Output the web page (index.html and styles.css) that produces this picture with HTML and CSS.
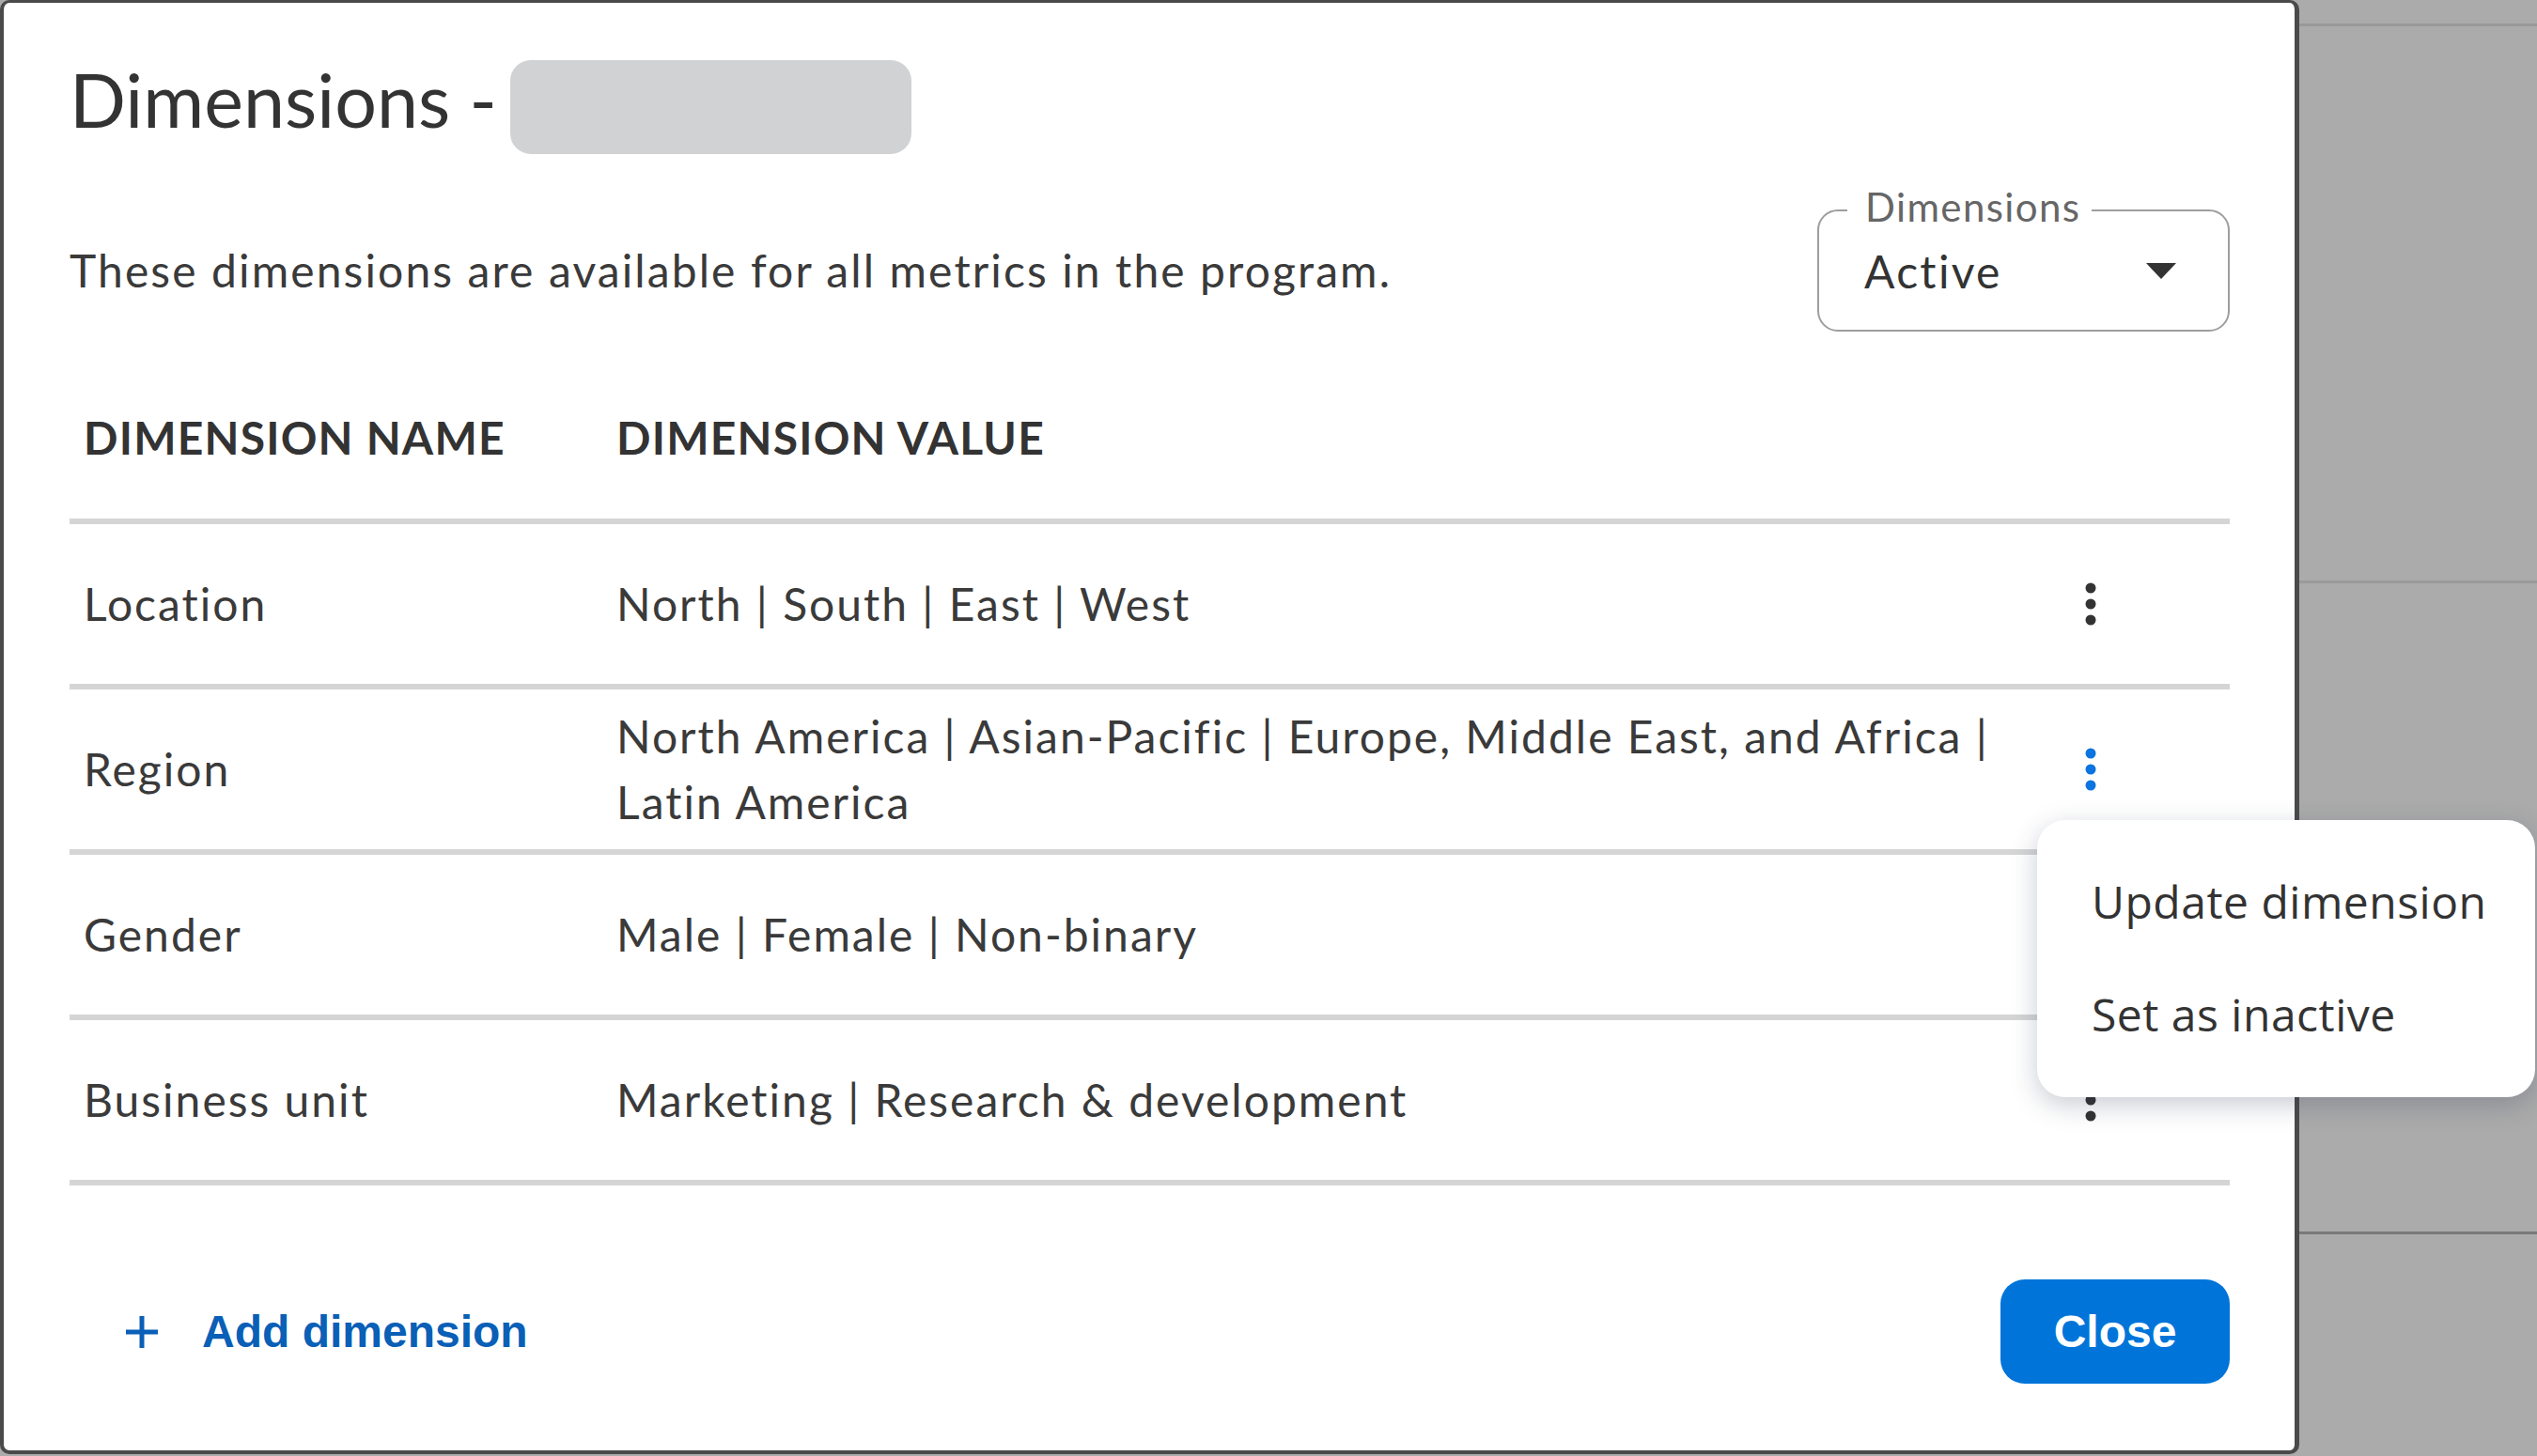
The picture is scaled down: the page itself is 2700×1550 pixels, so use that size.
FILE: index.html
```html
<!DOCTYPE html>
<html lang="en">
<head>
<meta charset="utf-8">
<title>Dimensions</title>
<link rel="stylesheet" href="styles.css">
</head>
<body>
<div class="modal">
  <div class="title-row">
    <h1 class="title">Dimensions -</h1>
    <div class="pill"></div>
  </div>
  <div class="desc-row">
    <p class="desc">These dimensions are available for all metrics in the program.</p>
    <div class="select">
      <span class="select-label">Dimensions</span>
      <span class="select-value">Active</span>
      <span class="caret"></span>
    </div>
  </div>
  <div class="table">
    <div class="row head">
      <div class="cell">DIMENSION NAME</div>
      <div class="cell">DIMENSION VALUE</div>
      <div class="cell"></div>
    </div>
    <div class="row">
      <div class="cell">Location</div>
      <div class="cell">North | South | East | West</div>
      <div class="cell kebab"><svg width="12" height="46" viewBox="0 0 12 46"><circle cx="6" cy="6" r="5.5"/><circle cx="6" cy="23" r="5.5"/><circle cx="6" cy="40" r="5.5"/></svg></div>
    </div>
    <div class="row">
      <div class="cell">Region</div>
      <div class="cell">North America | Asian-Pacific | Europe, Middle East, and Africa |<br>Latin America</div>
      <div class="cell kebab active"><svg width="12" height="46" viewBox="0 0 12 46"><circle cx="6" cy="6" r="5.5"/><circle cx="6" cy="23" r="5.5"/><circle cx="6" cy="40" r="5.5"/></svg></div>
    </div>
    <div class="row">
      <div class="cell">Gender</div>
      <div class="cell">Male | Female | Non-binary</div>
      <div class="cell kebab"><svg width="12" height="46" viewBox="0 0 12 46"><circle cx="6" cy="6" r="5.5"/><circle cx="6" cy="23" r="5.5"/><circle cx="6" cy="40" r="5.5"/></svg></div>
    </div>
    <div class="row">
      <div class="cell">Business unit</div>
      <div class="cell">Marketing | Research &amp; development</div>
      <div class="cell kebab"><svg width="12" height="46" viewBox="0 0 12 46"><circle cx="6" cy="6" r="5.5"/><circle cx="6" cy="23" r="5.5"/><circle cx="6" cy="40" r="5.5"/></svg></div>
    </div>
  </div>
  <div class="footer">
    <button class="add">
      <svg class="plus" width="34" height="36" viewBox="0 0 34 36"><path d="M17 1V35M0 18H34" stroke="currentColor" stroke-width="5"/></svg>
      <span>Add dimension</span>
    </button>
    <button class="close">Close</button>
  </div>
</div>
<div class="backdrop">
  <div class="band b1"></div>
  <div class="band b2"></div>
  <div class="band b3"></div>
</div>
<div class="menu">
  <div class="menu-item">Update dimension</div>
  <div class="menu-item">Set as inactive</div>
</div>
</body>
</html>
```
FILE: styles.css
```css
html, body {
  margin: 0;
  padding: 0;
}
body {
  width: 2700px;
  height: 1550px;
  background: #ababab;
  display: flex;
  align-items: flex-start;
  overflow: hidden;
  font-family: Lato, "Open Sans", sans-serif;
  color: #3a3a3a;
}
.modal {
  box-sizing: border-box;
  width: 2447px;
  height: 1548px;
  flex: none;
  background: #fff;
  border: 4px solid #4a4a4a;
  border-top-width: 3px;
  border-right-width: 5px;
  border-radius: 10px;
  padding: 61px 69px 0 70px;
}
.title-row {
  display: flex;
  align-items: flex-start;
  gap: 14px;
}
.title {
  margin: 0;
  font-size: 79px;
  line-height: 84px;
  font-weight: 400;
  color: #333;
}
.pill {
  width: 427px;
  height: 100px;
  border-radius: 22px;
  background: #d1d2d4;
}
.desc-row {
  display: flex;
  justify-content: space-between;
  align-items: flex-start;
  margin-top: 59px;
}
.desc {
  margin: 0;
  font-size: 48px;
  line-height: 130px;
  letter-spacing: 2.1px;
}
.select {
  position: relative;
  box-sizing: border-box;
  width: 439px;
  height: 130px;
  border: 2px solid #9e9e9e;
  border-radius: 22px;
  display: flex;
  align-items: center;
  justify-content: space-between;
  padding: 0 55px 0 48px;
}
.select-label {
  position: absolute;
  left: 30px;
  top: -26px;
  padding: 0 12px 0 19px;
  background: #fff;
  font-size: 42px;
  line-height: 42px;
  letter-spacing: 1.4px;
  color: #666;
}
.select-value {
  font-size: 48px;
  letter-spacing: 2.3px;
  color: #333;
}
.caret {
  width: 0;
  height: 0;
  border-left: 16px solid transparent;
  border-right: 16px solid transparent;
  border-top: 17px solid #333;
}
.table {
  display: flex;
  flex-direction: column;
}
.row {
  display: grid;
  grid-template-columns: 584px 1fr 150px;
  padding-right: 73px;
  height: 170px;
  align-items: center;
  border-bottom: 6px solid #d5d5d5;
  font-size: 48px;
  line-height: 70px;
  letter-spacing: 2px;
}
.row .cell:first-child {
  padding-left: 15px;
}
.row .cell:nth-child(2) {
  margin-left: -2px;
}
.row.head {
  height: 199px;
  align-items: start;
  font-weight: 700;
  line-height: 58px;
  letter-spacing: 1.2px;
  color: #333;
}
.row.head .cell {
  padding-top: 84px;
}
.kebab {
  display: flex;
  justify-content: center;
  fill: #333;
}
.kebab.active {
  fill: #0b74de;
}
.kebab svg {
  display: block;
}
.footer {
  display: flex;
  justify-content: space-between;
  align-items: center;
  margin-top: 100px;
  height: 111px;
}
button {
  font: inherit;
  border: none;
  background: none;
  padding: 0;
  cursor: pointer;
}
.add {
  display: flex;
  align-items: center;
  gap: 47px;
  margin-left: 60px;
  color: #0a5fb6;
  font-family: "Liberation Sans", Arial, sans-serif;
  font-weight: 700;
  font-size: 48px;
}
.plus {
  display: block;
}
.close {
  width: 244px;
  height: 111px;
  border-radius: 26px;
  background: #0074d9;
  color: #fff;
  font-family: "Liberation Sans", Arial, sans-serif;
  font-weight: 700;
  font-size: 48px;
}
.backdrop {
  flex: 1;
  display: flex;
  flex-direction: column;
}
.band {
  flex: none;
}
.b1 {
  height: 25px;
  border-bottom: 3px solid #999;
}
.b2 {
  height: 590px;
  border-bottom: 3px solid #9a9a9a;
}
.b3 {
  height: 690px;
  border-bottom: 3px solid #7a7a7a;
}
.menu {
  position: absolute;
  left: 2168px;
  top: 873px;
  box-sizing: border-box;
  width: 530px;
  height: 295px;
  padding-top: 26px;
  background: #fff;
  border-radius: 30px;
  box-shadow: 0 8px 28px rgba(40, 50, 80, 0.25);
}
.menu-item {
  height: 120px;
  display: flex;
  align-items: center;
  padding-left: 58px;
  font-family: "Open Sans", sans-serif;
  font-size: 48px;
  letter-spacing: 0.5px;
  color: #333;
}
```
